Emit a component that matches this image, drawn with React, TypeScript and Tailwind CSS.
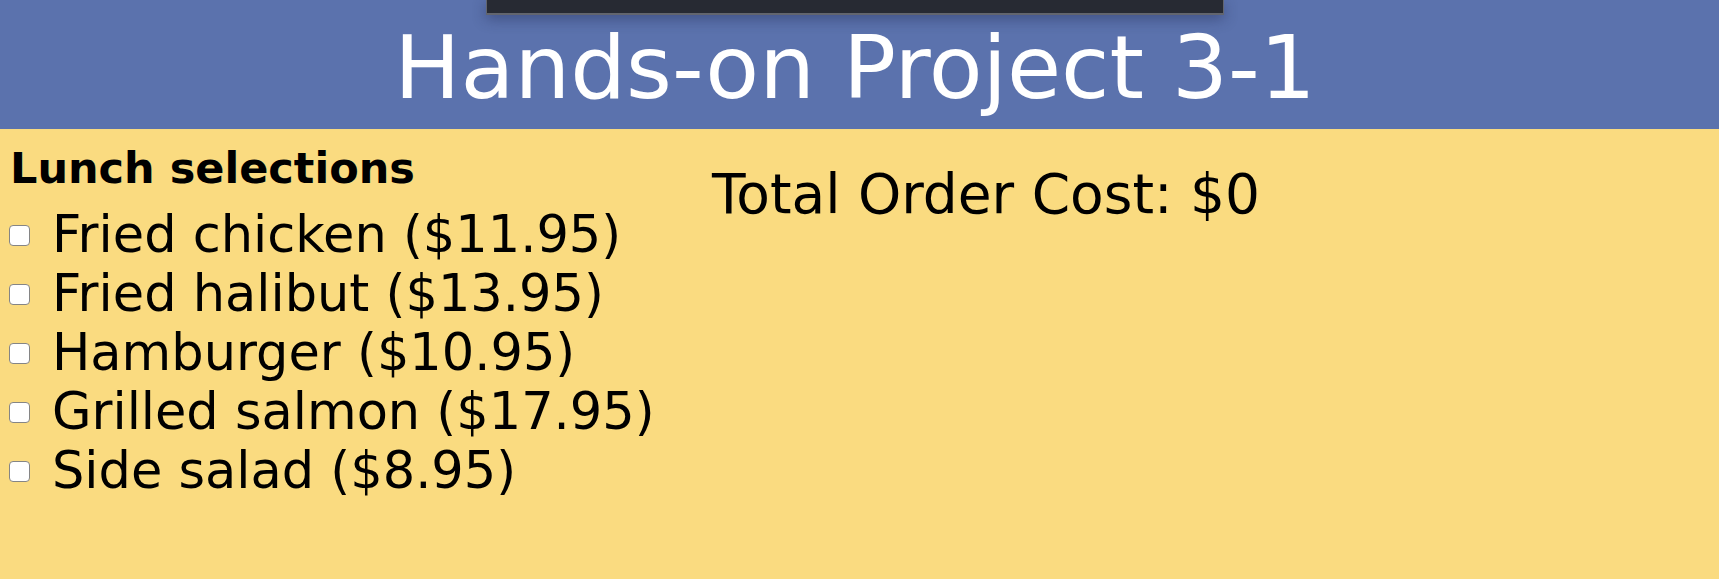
import React, { useState } from 'react';

const menuItems = [
  { id: 'chicken', name: 'Fried chicken', price: 11.95 },
  { id: 'halibut', name: 'Fried halibut', price: 13.95 },
  { id: 'burger', name: 'Hamburger', price: 10.95 },
  { id: 'salmon', name: 'Grilled salmon', price: 17.95 },
  { id: 'salad', name: 'Side salad', price: 8.95 },
];

export default function App() {
  const [checked, setChecked] = useState<Record<string, boolean>>({});

  const total = menuItems.reduce((sum, item) => (checked[item.id] ? sum + item.price : sum), 0);

  return (
    <div className="min-h-screen bg-white" style={{ fontFamily: '"DejaVu Sans", Verdana, sans-serif' }}>
      <div className="relative w-[1719px] h-[579px] bg-[#fadb80] text-black">
        {/* overlay bar at top of window */}
        <div className="absolute left-[486px] top-0 w-[738px] h-[15px] bg-[#272a33] border-b-2 border-x border-[#62656e] shadow-[0_4px_14px_rgba(30,40,80,0.45)]" />

        <header className="h-[129px] bg-[#5b72ad] pt-[18px] pr-[9px]">
          <h1 className="text-center text-white text-[88px] leading-[100px]">Hands-on Project 3-1</h1>
        </header>

        <div className="flex">
          <section className="w-[700px] pl-[10px] pt-[14px]">
            <h2 className="font-bold text-[43px] leading-[51px]">Lunch selections</h2>
            <div className="mt-[11px]">
              {menuItems.map((item) => (
                <label key={item.id} className="flex items-center text-[51px] leading-[59px]">
                  <input
                    type="checkbox"
                    checked={!!checked[item.id]}
                    onChange={(e) => setChecked({ ...checked, [item.id]: e.target.checked })}
                    className="appearance-none w-[21px] h-[21px] ml-[-1px] mr-[22px] mt-[1px] rounded-[4px] border border-[#858585] bg-white checked:bg-[#2563eb]"
                  />
                  <span>
                    {item.name} (${item.price})
                  </span>
                </label>
              ))}
            </div>
          </section>

          <section className="pt-[33px] pl-[12px]">
            <p className="text-[55px] leading-[64px]">Total Order Cost: ${total}</p>
          </section>
        </div>
      </div>
    </div>
  );
}
